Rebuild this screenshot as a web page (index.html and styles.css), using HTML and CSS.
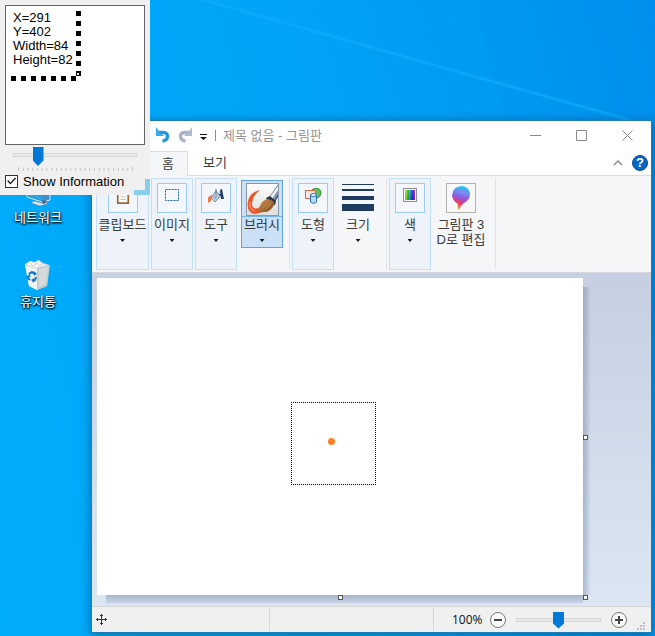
FILE: index.html
```
<!DOCTYPE html>
<html lang="ko">
<head>
  <meta charset="UTF-8" />
  <meta name="viewport" content="width=device-width, initial-scale=1.0" />
  <title>제목 없음 - 그림판</title>
  <link rel="stylesheet" href="styles.css">
</head>
<body>
  <!-- Desktop wallpaper and icons -->
  <svg class="wallpaper-beam" viewBox="0 0 655 130" width="655" height="130">
    <path d="M200 -1L640 123" stroke="#12adff" stroke-width="3" opacity="0.6" />
  </svg>

  <div class="desktop-icons">
    <a class="desktop-icon" href="#network">
      <svg width="32" height="32" viewBox="0 0 32 32">
        <path d="M5 5L28 2V25L20 27L5 22Z" fill="#3f8fc8" stroke="#cfe6f3" />
        <path d="M7 21L19 25V6L7 8Z" fill="#2aa5ea" />
        <path d="M12 26L20 28L25 27V29L18 31L9 28Z" fill="#d9e3ea" stroke="#71818f" stroke-width="0.6" />
        <path d="M20 26L24 25V28L21 29Z" fill="#44677f" />
      </svg>
      <span>네트워크</span>
    </a>
    <a class="desktop-icon" href="#trash">
      <svg width="32" height="32" viewBox="0 0 32 32">
        <path d="M3 5L8 2L13 3L17 1L21 4L27 6L25 27L15 31L7 27Z" fill="#e4e7e9" />
        <path d="M3 6L15 9V31L7 27Z" fill="#f1f3f4" />
        <path d="M15 9L28 6L25 27L15 31Z" fill="#c4c9cd" />
        <path d="M17 10L26 8L24 25L17 28Z" fill="#d6dadd" />
        <path d="M4 6L8 2L12 4L17 1L19 4L26 6L15 9Z" fill="#fafafa" stroke="#c2c7cb" stroke-width="0.7" />
        <path d="M8 4L11 7L15 4L17 7L21 5" fill="none" stroke="#c8cdd1" />
        <path d="M7 15L10 13L13 15M14 18L13 21L11 22M8 21L6 19L6 17" fill="none" stroke="#1478d4" stroke-width="2.2" />
        <path d="M12 12L15 15L12 17ZM12 19V24L9 21ZM5 18L7 15L9 18Z" fill="#1478d4" />
      </svg>
      <span>휴지통</span>
    </a>
  </div>

  <!-- Paint window -->
  <main class="window">
    <header class="titlebar">
      <button class="quick-btn" aria-label="실행 취소">
        <svg width="16" height="16" viewBox="0 0 16 16">
          <path d="M4 5.500H8.500C14 5.500 14 13 7.500 14" fill="none" stroke="#2496dc" stroke-width="3.4" />
          <path d="M1 0V9H9L5 5.500Z" fill="#35a8e8" />
        </svg>
      </button>
      <button class="quick-btn" aria-label="다시 실행">
        <svg width="16" height="16" viewBox="0 0 16 16">
          <path d="M12 5.500H7.500C2 5.500 2 13 8.500 14" fill="none" stroke="#a7b2c7" stroke-width="3.4" />
          <path d="M15 0V9H7L11 5.500Z" fill="#b2bccd" />
        </svg>
      </button>
      <button class="quick-more" aria-label="빠른 실행 도구 모음 사용자 지정">
        <svg width="7" height="6" viewBox="0 0 7 6"><path d="M0 0H7V1H0ZM0 3H7L3.500 6Z" fill="#111" /></svg>
      </button>
      <span class="title-divider"></span>
      <h1 class="title">제목 없음 - 그림판</h1>
      <div class="window-controls">
        <button aria-label="최소화"><svg width="11" height="11"><path d="M0 5.500H11" /></svg></button>
        <button aria-label="최대화"><svg width="11" height="11"><path d="M0.500 0.500H10.500V10.500H0.500Z" /></svg></button>
        <button aria-label="닫기"><svg width="11" height="11"><path d="M0.500 0.500L10.500 10.500M10.500 0.500L0.500 10.500" /></svg></button>
      </div>
    </header>

    <nav class="tabs">
      <button class="tab active">홈</button>
      <button class="tab">보기</button>
      <div class="tab-tools">
        <button aria-label="리본 최소화"><svg width="10" height="6"><path d="M1 5L5 1L9 5" fill="none" stroke="#8c8c8c" stroke-width="1.500" /></svg></button>
        <button class="help" aria-label="도움말">?</button>
      </div>
    </nav>

    <section class="ribbon">
      <button class="group group-wide">
        <span class="icon-box">
          <svg width="14" height="16" viewBox="0 0 16 18">
            <path d="M2 2H14V17H2Z" fill="#fff" stroke="#946a35" stroke-width="2" />
            <path d="M5 0H11V4H5Z" fill="#9aa3ad" />
            <path d="M5 7H11M5 10H11M5 13H11" stroke="#b4b9c0" />
          </svg>
        </span>
        <span class="label">클립보드</span>
        <span class="arrow"></span>
      </button>
      <button class="group">
        <span class="icon-box">
          <svg width="16" height="16" viewBox="0 0 16 16">
            <rect x="1.500" y="1.500" width="13" height="11" fill="none" stroke="#1d62a0" stroke-dasharray="2 1" />
          </svg>
        </span>
        <span class="label">이미지</span>
        <span class="arrow"></span>
      </button>
      <button class="group">
        <span class="icon-box">
          <svg width="18" height="16" viewBox="0 0 18 16">
            <path d="M9 11L14 1H15L17 11H14L13.500 8H12L11 11Z" fill="#243f63" />
            <path d="M13 3L13.500 6H12Z" fill="#eef4fa" />
            <path d="M4 10L9 3L13 8L8 14Z" fill="#d3dde8" stroke="#7189a5" />
            <path d="M6 10L9 5L11 8L8 12Z" fill="#8db2d1" />
            <path d="M9 6V1" stroke="#627991" stroke-width="1.200" />
            <path d="M1 15V10Q2 7 7 7L4 10V13Z" fill="#e77848" />
          </svg>
        </span>
        <span class="label">도구</span>
        <span class="arrow"></span>
      </button>
      <button class="group brush">
        <span class="brush-top">
          <svg width="33" height="33" viewBox="0 0 33 33">
            <defs>
              <linearGradient id="brushBg" x1="0" y1="0" x2="0" y2="1"><stop stop-color="#fefefe" /><stop offset="1" stop-color="#dedede" /></linearGradient>
              <linearGradient id="hair" x1="0" y1="0" x2="1" y2="1"><stop stop-color="#d79a52" /><stop offset="1" stop-color="#75431d" /></linearGradient>
            </defs>
            <rect x="0.500" y="0.500" width="32" height="32" fill="url(#brushBg)" stroke="#8a99aa" />
            <path d="M14 7Q4 9 2 18Q0 30 9 31Q16 30 21 25L14 24Q8 28 6 22Q6 13 14 7Z" fill="#e9562b" />
            <path d="M4 19Q3 27 9 28" fill="none" stroke="#f3895c" stroke-width="1.500" />
            <path d="M23 14L32 1V13L28 19Z" fill="#8796a8" />
            <path d="M24 14L32 3V7L26 16Z" fill="#edf1f5" />
            <path d="M28 18L32 11V14L29 19Z" fill="#42556e" />
            <path d="M20 15L24 13L30 18L29 22L23 21Z" fill="#2d3745" />
            <path d="M12 29Q14 18 21 16Q29 17 28 22Q24 31 12 29Z" fill="url(#hair)" />
            <path d="M17 25L22 19M20 26L25 20" stroke="#c98d4c" />
          </svg>
        </span>
        <span class="label">브러시</span>
        <span class="arrow"></span>
      </button>
      <span class="separator"></span>
      <button class="group">
        <span class="icon-box">
          <svg width="18" height="18" viewBox="0 0 18 18">
            <circle cx="12" cy="5" r="5" fill="#65bd55" stroke="#2b9339" />
            <rect x="1.500" y="2.500" width="10" height="8" fill="#fce5dc" stroke="#dc6945" />
            <path d="M6.500 7V14Q9.500 17 12.500 14V7Z" fill="#b7dcf6" stroke="#2a6bb2" />
            <ellipse cx="9.500" cy="7" rx="3" ry="1.500" fill="#eaf6ff" stroke="#2a6bb2" />
          </svg>
        </span>
        <span class="label">도형</span>
        <span class="arrow"></span>
      </button>
      <button class="group plain">
        <span class="size-icon"><i></i><i></i><i></i><i></i></span>
        <span class="label">크기</span>
        <span class="arrow"></span>
      </button>
      <span class="separator"></span>
      <button class="group">
        <span class="icon-box"><span class="rainbow"></span></span>
        <span class="label">색</span>
        <span class="arrow"></span>
      </button>
      <button class="group plain paint3d">
        <span class="paint3d-icon">
          <svg width="20" height="24" viewBox="0 0 20 24">
            <defs>
              <linearGradient id="drop" x1="0.600" y1="0" x2="0.400" y2="1">
                <stop stop-color="#1dd0ee" /><stop offset="0.300" stop-color="#6d83ee" /><stop offset="0.550" stop-color="#a34bd1" />
                <stop offset="0.750" stop-color="#e23c67" /><stop offset="1" stop-color="#f7b526" />
              </linearGradient>
            </defs>
            <path d="M10 0Q18 0 19 8Q19 14 13 17Q9 20 8 24Q6 23 7 18Q1 14 1 9Q2 1 10 0Z" fill="url(#drop)" />
            <path d="M2 10Q5 15 10 14L8 18Q2 15 2 10Z" fill="#e5406f" opacity="0.800" />
            <path d="M11 3Q17 5 16 10Q13 7 7 8Q7 3 11 3Z" fill="#8e83f3" opacity="0.700" />
          </svg>
        </span>
        <span class="label">그림판 3<br>D로 편집</span>
      </button>
      <span class="separator"></span>
    </section>

    <!-- Drawing area -->
    <section class="workspace">
      <div class="canvas">
        <div class="selection"><span class="dot"></span></div>
        <span class="handle handle-right"></span>
        <span class="handle handle-bottom"></span>
        <span class="handle handle-corner"></span>
      </div>
    </section>

    <footer class="statusbar">
      <div class="status-cell status-position">
        <svg width="11" height="11" viewBox="0 0 11 11">
          <path d="M5 0H6V11H5ZM0 5H11V6H0ZM4 1H7V2H4ZM4 9H7V10H4ZM1 4H2V7H1ZM9 4H10V7H9Z" fill="#1e3a5f" />
        </svg>
      </div>
      <div class="status-cell"></div>
      <div class="zoom">
        <label for="zoomRange">100%</label>
        <button aria-label="축소"><svg width="16" height="16"><circle cx="8" cy="8" r="7.500" /><path d="M4 8H12" /></svg></button>
        <input type="range" id="zoomRange" min="0" max="100" value="50" />
        <button aria-label="확대"><svg width="16" height="16"><circle cx="8" cy="8" r="7.500" /><path d="M4 8H12M8 4V12" /></svg></button>
        <svg class="grip" width="9" height="9"><path d="M6 0H8V2H6ZM3 3H5V5H3ZM6 3H8V5H6ZM0 6H2V8H0ZM3 6H5V8H3ZM6 6H8V8H6Z" fill="#bfbfbf" /></svg>
      </div>
    </footer>
  </main>

  <!-- Magnifier tool -->
  <aside class="magnifier">
    <div class="lens">
      <p>X=291<br>Y=402<br>Width=84<br>Height=82</p>
      <svg class="lens-pixels" width="75" height="75" viewBox="0 0 75 75">
        <path d="M67.500 5V75" stroke="#000" stroke-width="5" stroke-dasharray="5 5" />
        <path d="M0 72.500H65" stroke="#000" stroke-width="5" stroke-dasharray="5 5" />
        <path d="M66 67H68V69H66ZM66 73H67V75H66Z" fill="#ddd" />
      </svg>
    </div>
    <input type="range" class="lens-zoom" min="0" max="24" value="4" aria-label="Zoom" />
    <svg class="ticks" width="115" height="5" viewBox="0 0 115 5">
      <path d="M0 2.500H115" stroke="#c4c4c4" stroke-width="3" stroke-dasharray="1 3.750" />
      <path d="M0.500 0V4M114.500 0V4" stroke="#c4c4c4" />
    </svg>
    <label class="show-info"><input type="checkbox" checked /> Show Information</label>
    <span class="resize-corner"></span>
  </aside>
</body>
</html>
```

FILE: styles.css
```
* {
  box-sizing: border-box;
}

body {
  margin: 0;
  min-height: 100vh;
  position: relative;
  overflow: hidden;
  background: linear-gradient(75deg, #00adfb 0%, #00a4f8 55%, #008fec 100%);
  font-family: "Liberation Sans", "Noto Sans CJK KR", sans-serif;
  font-size: 13px;
  line-height: 15px;
  color: #3b3b3b;
}

button {
  padding: 0;
  border: none;
  background: none;
  font: inherit;
  color: inherit;
}

svg {
  display: block;
}

.wallpaper-beam {
  position: absolute;
  top: 0;
  left: 0;
}

/* Desktop icons */
.desktop-icons {
  width: 76px;
  padding-top: 175px;
  display: flex;
  flex-direction: column;
  gap: 34px;
}

.desktop-icon {
  display: flex;
  flex-direction: column;
  align-items: center;
  gap: 3px;
  color: #fff;
  text-decoration: none;
  text-shadow: 1px 1px 2px #000, 0 1px 2px #000;
}

/* Window */
.window {
  position: absolute;
  top: 120px;
  right: 3px;
  bottom: 3px;
  left: 91px;
  display: flex;
  flex-direction: column;
  border: 1px solid #1c7db4;
  background: #fff;
  box-shadow: 0 2px 10px rgba(0, 30, 70, 0.45);
}

.titlebar {
  display: flex;
  align-items: center;
  height: 30px;
  padding: 0 1px 2px 63px;
}

.quick-btn {
  width: 22px;
}

.quick-more {
  margin: 3px 8px 0 1px;
}

.title-divider {
  width: 1px;
  height: 11px;
  background: #8b8b8b;
}

.title {
  flex: 1;
  margin: 0 0 0 7px;
  font-size: 13px;
  font-weight: normal;
  color: #949494;
}

.window-controls {
  display: flex;
}

.window-controls button {
  width: 46px;
  height: 28px;
  display: flex;
  align-items: center;
  justify-content: center;
}

.window-controls path {
  fill: none;
  stroke: #8a8a8a;
}

.tabs {
  display: flex;
  height: 25px;
  padding-left: 56px;
  border-bottom: 1px solid #dadbdc;
}

.tab {
  width: 54px;
  padding-bottom: 2px;
}

.tab.active {
  width: 40px;
  height: 25px;
  border: 1px solid #dadbdc;
  border-bottom: none;
  background: #f5f6f7;
}

.tab-tools {
  display: flex;
  align-items: center;
  gap: 9px;
  margin-left: auto;
  padding-right: 3px;
}

.help {
  width: 16px;
  height: 16px;
  border: 1px solid #084a8c;
  border-radius: 50%;
  background: #0667c6;
  color: #fff;
  font-weight: bold;
  line-height: 14px;
}

/* Ribbon */
.ribbon {
  display: flex;
  gap: 2px;
  padding: 2px 4px;
  border-bottom: 1px solid #d4d8dc;
  background: #f5f6f7;
}

.group {
  display: flex;
  flex-direction: column;
  align-items: center;
  flex: none;
  width: 42px;
  height: 92px;
  padding-top: 4px;
  border: 1px solid #c3dff8;
  background: #edf3f8;
}

.group-wide {
  width: 53px;
}

.group.plain {
  width: 44px;
  border-color: transparent;
  background: none;
}

.group.paint3d {
  width: 56px;
}

.icon-box {
  display: flex;
  justify-content: center;
  width: 30px;
  height: 30px;
  padding-top: 4px;
  border: 1px solid #9ccbf8;
  background: #f3f7fb;
}

.label {
  margin-top: 4px;
  white-space: nowrap;
}

.arrow {
  width: 5px;
  height: 3px;
  margin-top: 7px;
  background: #1a1a1a;
  clip-path: polygon(0 0, 100% 0, 50% 100%);
}

.group.brush {
  height: 68px;
  margin: 2px 0 0 2px;
  padding-top: 2px;
  border-color: #62a2e4;
  background: #c9e0f7;
}

.brush-top {
  display: flex;
  justify-content: center;
  align-self: stretch;
  height: 34px;
  border-bottom: 1px solid #7ab2ea;
}

.brush .label {
  margin-top: 0;
}

.separator {
  width: 1px;
  height: 91px;
  margin-left: 4px;
  background: #e0e2e4;
}

.size-icon {
  display: flex;
  flex-direction: column;
  justify-content: space-between;
  width: 32px;
  height: 30px;
  padding: 1px 0 2px;
}

.size-icon i {
  height: 1px;
  background: #1f3a60;
}

.size-icon i:nth-child(2) {
  height: 2px;
}

.size-icon i:nth-child(3) {
  height: 4px;
}

.size-icon i:nth-child(4) {
  height: 7px;
}

.rainbow {
  width: 14px;
  height: 14px;
  border: 1px solid #8e8e8e;
  outline: 1px solid #fff;
  outline-offset: -2px;
  background: linear-gradient(rgba(255, 255, 255, 0.1), rgba(0, 0, 0, 0.2)),
    linear-gradient(90deg, #f08020, #c7e020, #20c040, #20b0d0, #2030e0, #8020e0, #e030a0);
}

.paint3d-icon {
  display: flex;
  align-items: center;
  justify-content: center;
  width: 30px;
  height: 30px;
  border: 1px solid #b0b0b0;
  background: #f8f8f8;
}

/* Drawing area */
.workspace {
  flex: 1;
  display: flex;
  padding: 5px 68px 11px 5px;
  background: linear-gradient(#c5cfe1, #dce6f3);
}

.canvas {
  flex: 1;
  position: relative;
  background: #fff;
}

.canvas::before,
.canvas::after {
  content: "";
  position: absolute;
}

.canvas::before {
  top: 9px;
  bottom: 0;
  left: 100%;
  width: 8px;
  background: linear-gradient(90deg, rgba(90, 115, 150, 0.4), rgba(90, 115, 150, 0));
}

.canvas::after {
  top: 100%;
  left: 9px;
  right: 0;
  height: 8px;
  background: linear-gradient(#a6b5cb, #c8d4e4);
}

.selection {
  position: absolute;
  top: 124px;
  left: 194px;
  width: 85px;
  height: 83px;
  background:
    repeating-linear-gradient(90deg, #000 0 1px, transparent 1px 2px) 0 0 / 100% 1px no-repeat,
    repeating-linear-gradient(90deg, #000 0 1px, transparent 1px 2px) 0 100% / 100% 1px no-repeat,
    repeating-linear-gradient(#000 0 1px, transparent 1px 2px) 0 0 / 1px 100% no-repeat,
    repeating-linear-gradient(#000 0 1px, transparent 1px 2px) 100% 0 / 1px 100% no-repeat;
}

.dot {
  position: absolute;
  top: 36px;
  left: 37px;
  width: 7px;
  height: 7px;
  border-radius: 50%;
  background: #ff7f27;
}

.handle {
  position: absolute;
  z-index: 1;
  width: 5px;
  height: 5px;
  border: 1px solid #555;
  background: #fff;
}

.handle-right {
  top: 157px;
  left: 100%;
}

.handle-bottom {
  top: 100%;
  left: 241px;
}

.handle-corner {
  top: 100%;
  left: 100%;
}

/* Status bar */
.statusbar {
  display: flex;
  height: 26px;
  border-top: 1px solid #d5d5d5;
  background: #f0f0f0;
}

.status-cell {
  flex: 1;
  margin: 1px 0;
  border-right: 1px solid #d7d7d7;
}

.status-position {
  flex: 0 0 178px;
  padding: 6px 4px;
}

.zoom {
  flex: 0 0 217px;
  display: flex;
  align-items: center;
  gap: 10px;
  padding-left: 18px;
  color: #111;
}

.zoom label {
  width: 28px;
  font-family: "Open Sans", sans-serif;
  font-size: 12px;
  white-space: nowrap;
}

.zoom circle {
  fill: #fafafa;
  stroke: #777;
}

.zoom button path {
  fill: none;
  stroke: #444;
  stroke-width: 2;
}

.grip {
  align-self: flex-end;
  margin-bottom: 1px;
}

/* Sliders */
input[type="range"] {
  appearance: none;
  width: 85px;
  height: 20px;
  margin: 0;
  background: none;
}

input[type="range"]::-webkit-slider-runnable-track {
  height: 4px;
  border: 1px solid #d6d6d6;
  background: #e7eaea;
}

input[type="range"]::-webkit-slider-thumb {
  appearance: none;
  width: 11px;
  height: 17px;
  margin-top: -7px;
  background: #0078d7;
  clip-path: polygon(0 0, 100% 0, 100% 70%, 50% 100%, 0 70%);
}

/* Magnifier */
.magnifier {
  position: absolute;
  top: 0;
  left: 0;
  display: flex;
  flex-direction: column;
  width: 150px;
  height: 195px;
  padding: 5px;
  background: #f0f0f0;
  color: #000;
}

.lens {
  position: relative;
  flex: none;
  height: 140px;
  padding: 5px 7px;
  border: 1px solid #646464;
  background: #fff;
}

.lens p {
  margin: 0;
  line-height: 14px;
}

.lens-pixels {
  position: absolute;
  top: 0;
  left: 5px;
}

.magnifier .lens-zoom {
  width: 124px;
  margin-left: 8px;
}

.magnifier .lens-zoom::-webkit-slider-thumb {
  height: 19px;
  margin-top: -7px;
}

.ticks {
  margin: 2px 0 0 13px;
}

.show-info {
  display: flex;
  align-items: center;
  gap: 5px;
  height: 18px;
  white-space: nowrap;
}

.show-info input {
  appearance: none;
  width: 13px;
  height: 13px;
  margin: 0;
  border: 1px solid #333;
  background: #fff;
}

.show-info input:checked::before {
  content: "";
  display: block;
  width: 11px;
  height: 11px;
  background: #222;
  clip-path: polygon(10% 50%, 20% 42%, 40% 64%, 82% 18%, 92% 28%, 40% 82%);
}

.resize-corner {
  position: absolute;
  right: 0;
  bottom: 0;
  width: 16px;
  height: 16px;
  background: #87ceeb;
  clip-path: polygon(11px 0, 100% 0, 100% 100%, 0 100%, 0 11px, 11px 11px);
}
```
